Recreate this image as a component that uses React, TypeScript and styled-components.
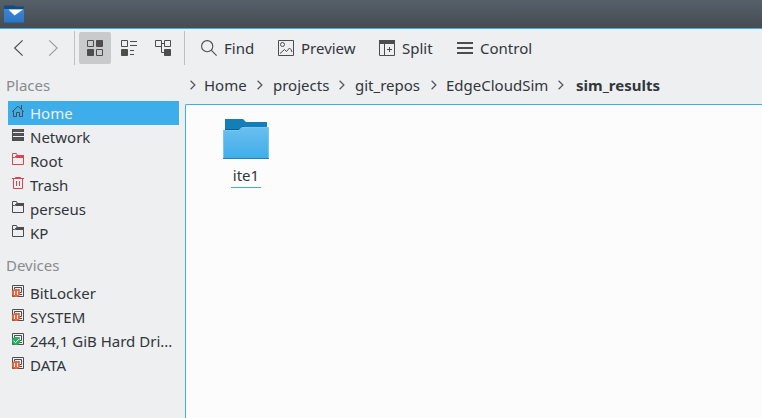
import React from "react";
import styled, { createGlobalStyle, css } from "styled-components";

const ink = "#31363b";
const glyph = "#4d4d4d";
const accent = "#3daee9";
const red = "#da4453";

const Global = createGlobalStyle`
  * { box-sizing: border-box; }
  body { margin: 0; overflow: hidden; }
  svg { display: block; flex: none; }
`;

const Window = styled.div`
  width: 762px;
  height: 418px;
  display: flex;
  flex-direction: column;
  overflow: hidden;
  background: #eeeff1;
  color: ${ink};
  font: 15px/24px "Noto Sans", sans-serif;
  white-space: nowrap;
`;

const TitleBar = styled.header`
  height: 29px;
  flex: none;
  padding: 5px 0 0 4px;
  background: linear-gradient(#566068, #454c53);
  border-bottom: 1px solid ${accent};
`;

const Toolbar = styled.div`
  height: 39px;
  flex: none;
  display: flex;
  align-items: center;
  padding: 0 0 1px 2px;
`;

const IconButton = styled.button<{ $active?: boolean; $gap?: number }>`
  width: 32px;
  height: 32px;
  margin: 0 0 0 ${(p) => p.$gap ?? 2}px;
  padding: 0;
  flex: none;
  border: 0;
  border-radius: 2px;
  display: grid;
  place-items: center;
  background: ${(p) => (p.$active ? "#c9cacc" : "transparent")};
`;

const Separator = styled.div<{ $gap: number }>`
  width: 1px;
  height: 34px;
  margin-left: ${(p) => p.$gap}px;
  background: #bfc1c3;
`;

const ActionButton = styled.button<{ $width: number }>`
  width: ${(p) => p.$width}px;
  flex: none;
  display: flex;
  align-items: center;
  gap: 7px;
  padding: 0;
  border: 0;
  background: none;
  color: inherit;
  font: inherit;
`;

const Actions = styled.div`
  display: flex;
  margin-left: 16px;
`;

const Main = styled.div`
  flex: 1;
  min-height: 0;
  display: flex;
`;

const Sidebar = styled.aside`
  width: 185px;
  flex: none;
  padding-top: 5px;
`;

const SectionTitle = styled.h2`
  height: 24px;
  margin: 0;
  padding-left: 6px;
  color: #888b8e;
  font: inherit;
`;

const PlaceList = styled.ul`
  list-style: none;
  margin: 4px 6px 8px 8px;
  padding: 0;
`;

const Place = styled.li<{ $selected?: boolean }>`
  height: 24px;
  display: flex;
  padding: 3px 0 0 4px;
  gap: 6px;
  ${(p) => p.$selected && css`background: ${accent};`}
`;

const PlaceName = styled.span<{ $selected?: boolean }>`
  height: 18px;
  line-height: 18px;
  color: ${(p) => (p.$selected ? "#eff0f1" : "inherit")};
`;

const Content = styled.section`
  flex: 1;
  display: flex;
  flex-direction: column;
`;

const Breadcrumb = styled.nav`
  height: 36px;
  display: flex;
  padding: 5px 0 0 5px;
`;

const Crumb = styled.div<{ $width: number; $gap: number; $current?: boolean }>`
  width: ${(p) => p.$width}px;
  height: 24px;
  flex: none;
  display: flex;
  align-items: center;
  gap: ${(p) => p.$gap}px;
  font-weight: ${(p) => (p.$current ? 700 : 400)};
`;

const FileView = styled.main`
  flex: 1;
  border-left: 1px solid ${accent};
  border-top: 1px solid ${accent};
  border-top-left-radius: 2px;
  background: #fcfcfc;
  padding: 14px 0 0 30px;
`;

const FileItem = styled.div`
  width: 60px;
  display: flex;
  flex-direction: column;
  align-items: center;
`;

const FileName = styled.span`
  width: 30px;
  height: 24px;
  margin-top: 5px;
  text-align: center;
  line-height: 22px;
  border-bottom: 1px solid ${accent};
`;

const AppIcon = () => (
  <svg width="20" height="18" viewBox="0 0 20 18">
    <defs>
      <linearGradient id="app" x2="0" y2="1">
        <stop stopColor="#3c86d3" />
        <stop offset="1" stopColor="#2e73c4" />
      </linearGradient>
    </defs>
    <path d="M0 .5h10l2 1h8v6H0z" fill="#124d82" />
    <path d="M0 4h20v14H0z" fill="url(#app)" />
    <path d="M4.5 4.5h14.5L10.5 10.5z" fill="#fff" />
    <path d="M0 17.5h20" stroke="#2867ad" />
  </svg>
);

const Arrow = ({ forward }: { forward?: boolean }) => (
  <svg width="16" height="16" fill="none" stroke={forward ? "#9b9da0" : glyph} strokeWidth="1.15">
    <path d={forward ? "M5.2.4l8 7.6-8 7.6" : "M12.6.4l-8 7.6 8 7.6"} />
  </svg>
);

const GridIcon = () => (
  <svg width="16" height="16" fill={glyph} stroke={glyph}>
    <path d="M.5.5h6v6h-6zM9.5 9.5h6v6h-6z" fill="none" />
    <path d="M9.5.5h6v6h-6zM.5 9.5h6v6h-6z" />
  </svg>
);

const DetailsIcon = () => (
  <svg width="16" height="16" fill="none" stroke={glyph}>
    <path d="M.5.5h6v6h-6zM9 1.5h7M9 5.5h7M9 10.5h4M9 14.5h4" />
    <path d="M.5 9.5h6v6h-6z" fill={glyph} />
  </svg>
);

const TreeIcon = () => (
  <svg width="16" height="16" fill="none" stroke={glyph}>
    <path d="M.5.5h6v6h-6zM9.5.5h6v6h-6zM7 3.5h2.5M6.5 3.5v9H10" />
    <path d="M9.5 9.5h6v6h-6z" fill={glyph} />
  </svg>
);

const FindIcon = () => (
  <svg width="16" height="16" fill="none" stroke={glyph} strokeWidth="1.1">
    <circle cx="6.2" cy="6.2" r="5.6" />
    <path d="M10.2 10.2l5.4 5.4" />
  </svg>
);

const PreviewIcon = () => (
  <svg width="16" height="16" fill="none" stroke={glyph}>
    <path d="M.5.5h15v15H.5z" />
    <circle cx="4.5" cy="4.5" r="2" />
    <path d="M2 13.5l4.5-4 2 2 3-3.5 1.5 1.5 1 2.5" />
  </svg>
);

const SplitIcon = () => (
  <svg width="16" height="16" fill="none" stroke={glyph}>
    <path d="M.5.5h15v15H.5zM5.5 3v13M8 9.5h5M10.5 7v5" />
    <path d="M0 0h16v4H0z" fill={glyph} stroke="none" />
  </svg>
);

const MenuIcon = () => (
  <svg width="16" height="16" fill={glyph}>
    <path d="M0 2h16v2H0zM0 7h16v2H0zM0 12h16v2H0z" />
  </svg>
);

const Chevron = () => (
  <svg width="6" height="10" fill="none" stroke="#50555a" strokeWidth="1.2">
    <path d="M.6.8l4.3 4.2-4.3 4.2" />
  </svg>
);

const HomeIcon = () => (
  <svg width="12" height="14" fill="none" stroke={glyph}>
    <path d="M.3 7.8L6 2.1l5.7 5.7M9.5 1v4" />
    <path d="M1.5 7v5.5h3v-4h3v4h3V7" />
  </svg>
);

const NetworkIcon = () => (
  <svg width="12" height="14">
    <path d="M0 1h12v3H0zM0 5h12v3H0zM0 9h12v4H0z" fill={glyph} />
    <path d="M2 2.5h8M2 6.5h8M2 11h8" stroke="#666768" strokeWidth=".6" />
    <path d="M1 4.5h11M1 8.5h11" stroke="#eeeff1" />
    <path d="M.5 1v12" stroke={glyph} />
  </svg>
);

const FolderIcon = ({ color = glyph }: { color?: string }) => (
  <svg width="12" height="14" fill="none" stroke={color}>
    <path d="M.5 1.5h4l1 2h6v9H.5zM.5 5.5h2l2-2h7" />
    <path d="M5 3h7v3H3z" fill={color} stroke="none" />
  </svg>
);

const TrashIcon = () => (
  <svg width="12" height="14" fill="none" stroke={red}>
    <path d="M0 2.5h12M3.5 2.5v-1h5v1M1.5 2.5v10h9v-10M4.5 5v5M7.5 5v5" />
  </svg>
);

const DriveIcon = ({ mounted }: { mounted?: boolean }) => (
  <svg width="12" height="14" fill="none">
    <path d="M.5 1.5h11v11H.5zM2.5 3.5h7v5h-7zM4 10.5h6" stroke={glyph} />
    <path d="M4.5 5.5h3v1h-3z" stroke={glyph} strokeWidth=".6" />
    <circle cx="4" cy="9" r="4" fill={mounted ? "#27ae60" : "#f0643b"} />
    <path d={mounted ? "M1.5 8.8l2 1.8 3.5-3.5" : "M2.5 7v4M5.5 7v4"} stroke="#fff" />
  </svg>
);

const BigFolder = () => (
  <svg width="46" height="40" viewBox="0 0 46 40">
    <defs>
      <linearGradient id="front" x2="0" y2="1">
        <stop stopColor="#6bbfee" />
        <stop offset="1" stopColor="#3daee9" />
      </linearGradient>
    </defs>
    <path d="M2 0h18l3 3h21v9H2z" fill="#147eb8" />
    <path d="M2 10h15l3-3 1 1-3 4H2z" fill="#0b5f90" />
    <path d="M0 11h16l3-3h27v32H0z" fill="url(#front)" />
    <path d="M.5 40V11.5H16l3-3h26.5V40" fill="none" stroke="#79c6ef" />
    <path d="M0 39.5h46" stroke="#2680b3" />
  </svg>
);

const actions = [
  { label: "Find", width: 77, icon: <FindIcon /> },
  { label: "Preview", width: 101, icon: <PreviewIcon /> },
  { label: "Split", width: 78, icon: <SplitIcon /> },
  { label: "Control", width: 80, icon: <MenuIcon /> },
];

const places = [
  { name: "Home", icon: <HomeIcon />, selected: true },
  { name: "Network", icon: <NetworkIcon /> },
  { name: "Root", icon: <FolderIcon color={red} /> },
  { name: "Trash", icon: <TrashIcon /> },
  { name: "perseus", icon: <FolderIcon /> },
  { name: "KP", icon: <FolderIcon /> },
];

const devices = [
  { name: "BitLocker", icon: <DriveIcon /> },
  { name: "SYSTEM", icon: <DriveIcon /> },
  { name: "244,1 GiB Hard Dri...", icon: <DriveIcon mounted /> },
  { name: "DATA", icon: <DriveIcon /> },
];

const crumbs = [
  { name: "Home", width: 67, gap: 8 },
  { name: "projects", width: 82, gap: 10 },
  { name: "git_repos", width: 92, gap: 10 },
  { name: "EdgeCloudSim", width: 127, gap: 9 },
  { name: "sim_results", width: 110, gap: 12 },
];

const PlaceSection = ({ title, items }: {
  title: string;
  items: { name: string; icon: React.ReactNode; selected?: boolean }[];
}) => (
  <>
    <SectionTitle>{title}</SectionTitle>
    <PlaceList>
      {items.map((item) => (
        <Place key={item.name} $selected={item.selected}>
          {item.icon}
          <PlaceName $selected={item.selected}>{item.name}</PlaceName>
        </Place>
      ))}
    </PlaceList>
  </>
);

export default function App() {
  return (
    <Window>
      <Global />
      <TitleBar><AppIcon /></TitleBar>
      <Toolbar>
        <IconButton $gap={0} aria-label="Back"><Arrow /></IconButton>
        <IconButton aria-label="Forward"><Arrow forward /></IconButton>
        <Separator $gap={6} />
        <IconButton $gap={4} $active aria-label="Icons"><GridIcon /></IconButton>
        <IconButton aria-label="Compact"><DetailsIcon /></IconButton>
        <IconButton aria-label="Details"><TreeIcon /></IconButton>
        <Separator $gap={5} />
        <Actions>
          {actions.map((a) => (
            <ActionButton key={a.label} $width={a.width}>{a.icon}<span>{a.label}</span></ActionButton>
          ))}
        </Actions>
      </Toolbar>
      <Main>
        <Sidebar>
          <PlaceSection title="Places" items={places} />
          <PlaceSection title="Devices" items={devices} />
        </Sidebar>
        <Content>
          <Breadcrumb>
            {crumbs.map((c, i) => (
              <Crumb key={c.name} $width={c.width} $gap={c.gap} $current={i === crumbs.length - 1}>
                <Chevron /><span>{c.name}</span>
              </Crumb>
            ))}
          </Breadcrumb>
          <FileView>
            <FileItem><BigFolder /><FileName>ite1</FileName></FileItem>
          </FileView>
        </Content>
      </Main>
    </Window>
  );
}
